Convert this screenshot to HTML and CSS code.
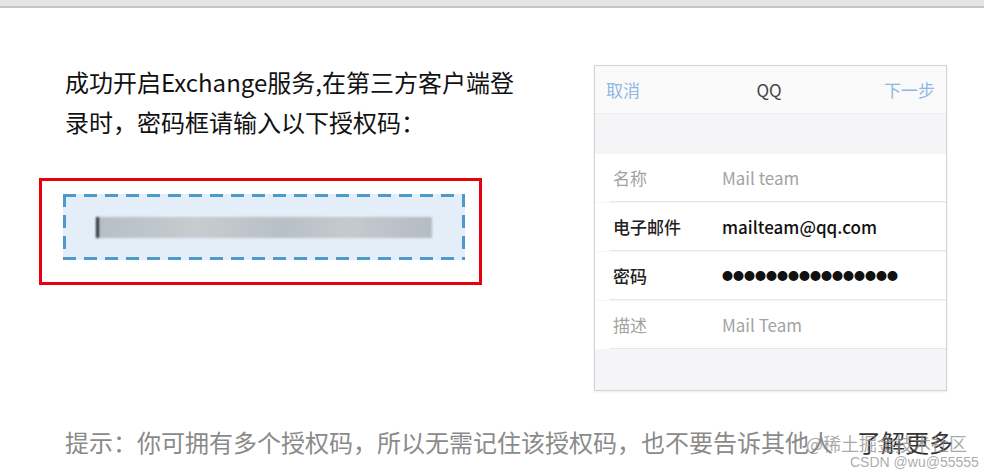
FILE: index.html
```html
<!DOCTYPE html>
<html lang="zh-CN">
<head>
    <meta charset="UTF-8">
    <title>开启Exchange服务</title>
    <link rel="stylesheet" href="styles.css">
</head>
<body>

<div class="topbar"></div>

<div class="content">
    <div class="main">
        <div class="left">
            <p class="intro">成功开启Exchange服务,在第三方客户端登录时，密码框请输入以下授权码：</p>
            <div class="code-frame">
                <div class="code-box">
                    <div class="code-blur"></div>
                </div>
            </div>
        </div>

        <div class="phone">
            <div class="phone-head">
                <span class="link">取消</span>
                <span class="title">QQ</span>
                <span class="link">下一步</span>
            </div>
            <div class="phone-gap"></div>
            <div class="phone-row muted">
                <span class="label">名称</span>
                <span class="value">Mail team</span>
            </div>
            <div class="phone-row">
                <span class="label">电子邮件</span>
                <span class="value">mailteam@qq.com</span>
            </div>
            <div class="phone-row">
                <span class="label">密码</span>
                <span class="value dots">●●●●●●●●●●●●●●●●</span>
            </div>
            <div class="phone-row muted">
                <span class="label">描述</span>
                <span class="value">Mail Team</span>
            </div>
        </div>
    </div>

    <p class="tip">提示：你可拥有多个授权码，所以无需记住该授权码，也不要告诉其他人<a class="more">了解更多</a></p>
</div>

<div class="mark-juejin">@稀土掘金技术社区</div>
<div class="mark-csdn">CSDN @wu@55555</div>

</body>
</html>
```

FILE: styles.css
```css
body {
    margin: 0;
    font-family: "Noto Sans CJK SC", "Noto Sans", sans-serif;
    background: #fff;
    color: #111;
    position: relative;
    height: 476px;
    overflow: hidden;
}
.topbar {
    height: 6px;
    background: #e5e5e5;
    border-bottom: 2px solid #c4c4c4;
}
.content {
    padding: 54px 0 0 39px;
}
.main {
    display: flex;
    align-items: flex-start;
    gap: 112px;
}
.left {
    width: 443px;
}
.intro {
    margin: 0 0 36px 26px;
    width: 460px;
    font-size: 24px;
    line-height: 40px;
}
.code-frame {
    border: 3px solid #e8000c;
    padding: 13px 14px 22px 21px;
}
.code-box {
    padding: 23px 33px 22px 33px;
    background:
        repeating-linear-gradient(90deg, #4e9bcb 0 13px, transparent 13px 21px) top / 100% 3px no-repeat,
        repeating-linear-gradient(90deg, #4e9bcb 0 13px, transparent 13px 21px) bottom / 100% 3px no-repeat,
        repeating-linear-gradient(180deg, #4e9bcb 0 13px, transparent 13px 21px) left / 3px 100% no-repeat,
        repeating-linear-gradient(180deg, #4e9bcb 0 13px, transparent 13px 21px) right / 3px 100% no-repeat,
        #e3eef9;
}
.code-blur {
    height: 21px;
    border-left: 3px solid #2e3238;
    background: linear-gradient(90deg, #b7bfc5, #c6ccd0 30%, #b9c0c5 55%, #c4cace 75%, #b5bcc2);
    filter: blur(1px);
}
.phone {
    margin-top: 3px;
    width: 351px;
    height: 324px;
    border: 1px solid #d3d3d3;
    box-shadow: 0 1px 2px rgba(0, 0, 0, 0.08);
    background: #f5f5f7;
    font-size: 17px;
}
.phone-head {
    height: 47px;
    padding: 0 11px;
    display: flex;
    align-items: center;
    justify-content: space-between;
    background: #fafafa;
    border-bottom: 1px solid #ececec;
}
.phone-head .link {
    color: #8fb6e4;
}
.phone-head .title {
    color: #444;
    margin-left: 14px;
}
.phone-gap {
    height: 40px;
}
.phone-row {
    background: #fff;
    height: 48px;
    display: flex;
    align-items: center;
    padding: 0 0 2px 18px;
    box-sizing: border-box;
    position: relative;
}
.phone-row::after {
    content: "";
    position: absolute;
    left: 15px;
    right: 0;
    bottom: 0;
    height: 1px;
    background: #e7e7e7;
}
.phone-row:not(:last-child) {
    margin-bottom: 1px;
}
.label {
    width: 109px;
    color: #222;
    font-weight: 500;
}
.value {
    color: #111;
    font-weight: 500;
}
.phone-row.muted .label,
.phone-row.muted .value {
    color: #a3a3a3;
    font-weight: 400;
}
.dots {
    font-size: 11px;
}
.tip {
    margin: 31px 0 0 26px;
    font-size: 24px;
    line-height: 40px;
    color: #8a8a8a;
    white-space: nowrap;
}
.more {
    color: #333;
    margin-left: 24px;
}
.mark-juejin {
    position: absolute;
    left: 806px;
    top: 431px;
    font-size: 18px;
    line-height: 24px;
    color: rgba(140, 140, 140, 0.75);
}
.mark-csdn {
    position: absolute;
    left: 850px;
    top: 453px;
    font-family: "Liberation Sans", Arial, sans-serif;
    font-size: 14px;
    line-height: 18px;
    color: rgba(150, 150, 150, 0.8);
}
```
